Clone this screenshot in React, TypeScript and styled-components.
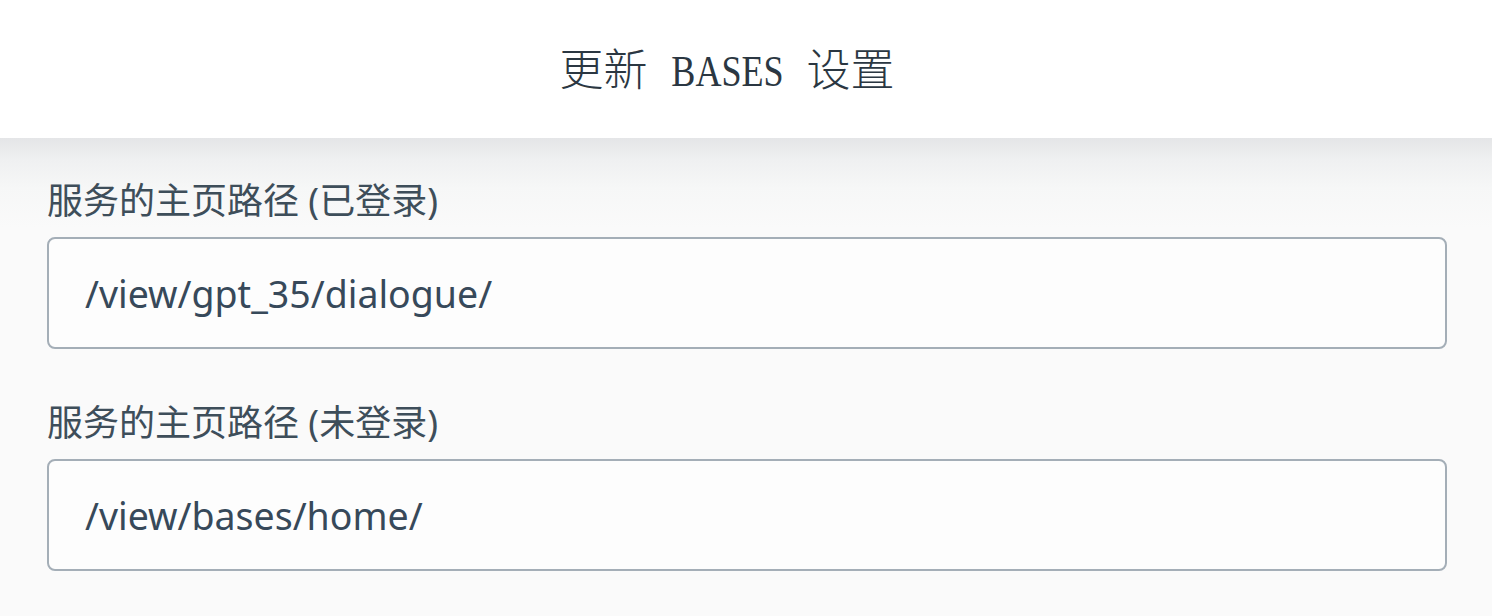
import React, { ReactElement } from 'react';
import styled, { createGlobalStyle } from 'styled-components';

const GlobalStyle = createGlobalStyle`
  html, body {
    margin: 0;
    padding: 0;
    background: #fafafa;
  }
  * {
    box-sizing: border-box;
  }
`;

const fields = [
  { label: '服务的主页路径 (已登录)', value: '/view/gpt_35/dialogue/' },
  { label: '服务的主页路径 (未登录)', value: '/view/bases/home/' },
];

function App(): ReactElement {
  return (
    <>
      <GlobalStyle />
      <Header>
        <Title>
          更新 <Latin>BASES</Latin> 设置
        </Title>
      </Header>
      <Form>
        {fields.map((f) => (
          <Field key={f.label}>
            <Label>{f.label}</Label>
            <Input defaultValue={f.value} />
          </Field>
        ))}
      </Form>
    </>
  );
}

const Header = styled.header`
  height: 138px;
  padding-right: 38px;
  background: #ffffff;
  display: flex;
  align-items: center;
  justify-content: center;
`;

const Title = styled.h1`
  margin: 0 0 4px;
  font-family: 'Liberation Serif', 'Noto Sans CJK SC', serif;
  font-weight: 300;
  font-size: 44px;
  color: #2b3742;
  white-space: pre;
`;

const Latin = styled.span`
  display: inline-block;
  transform: scaleX(0.82);
  margin: 0;
  font-weight: 400;
`;

/* 헤더 아래 그림자처럼 보이는 그라데이션 */
const Form = styled.main`
  min-height: 478px;
  padding: 40px 45px 0 47px;
  display: flex;
  flex-direction: column;
  gap: 51px;
  background: linear-gradient(#e4e5e7 0, #eff0f1 22px, #f6f7f7 50px, #fafafa 90px, #fafafa 100%);
`;

const Field = styled.div`
  display: flex;
  flex-direction: column;
`;

const Label = styled.label`
  font-family: 'Noto Sans', 'Noto Sans CJK SC', sans-serif;
  font-size: 36px;
  line-height: 46px;
  color: #3e4e5a;
  margin-bottom: 13px;
`;

const Input = styled.input`
  height: 112px;
  width: 100%;
  padding: 0 36px;
  border: 2px solid #a4aeb7;
  border-radius: 8px;
  background: #fdfdfd;
  font-family: 'Noto Sans', 'Noto Sans CJK SC', sans-serif;
  font-size: 37.5px;
  color: #37495a;
  outline: none;
`;

export default App;
